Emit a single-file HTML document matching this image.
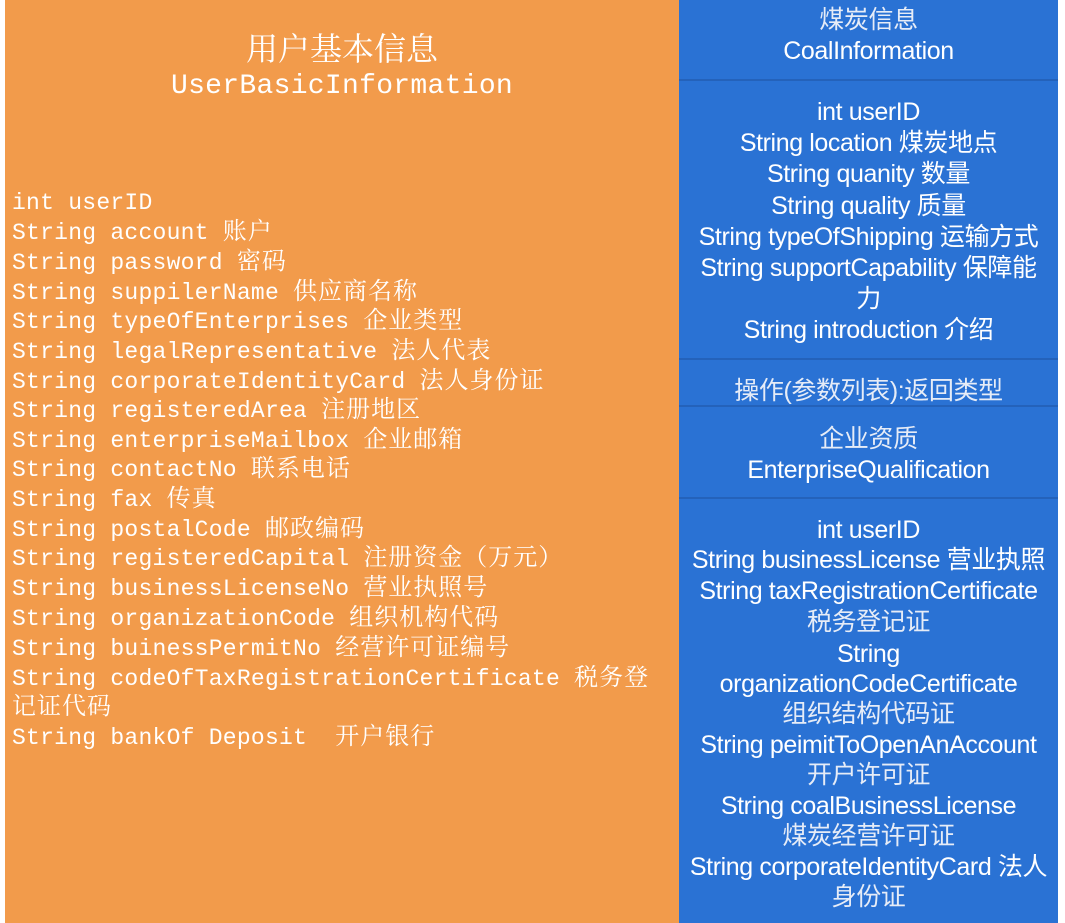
<!DOCTYPE html>
<html><head><meta charset="utf-8"><style>
body{margin:0;width:1065px;height:923px;background:#fff;position:relative;overflow:hidden}
#o{position:absolute;left:5px;top:0;width:674px;height:923px;background:#F29B4B}
#b{position:absolute;left:679px;top:0;width:379px;height:923px;background:#2A72D4}
.hr{position:absolute;left:679px;width:379px;height:2px;background:#2462BA}
.l{position:absolute;left:12px;height:30px;line-height:30px;margin-top:2px;font-family:"Liberation Mono","Noto Serif CJK SC",monospace;font-size:23px;letter-spacing:0.25px;color:#fff;white-space:pre}
.l b{font-weight:normal;font-size:24px;letter-spacing:1px}
.r{position:absolute;left:669px;width:399px;text-align:center;height:31px;line-height:31px;margin-top:2px;font-family:"Liberation Sans","Noto Sans CJK SC",sans-serif;font-size:25px;color:#fff;white-space:pre;letter-spacing:-0.4px}
.c{color:#e6ecf7}
</style></head><body>
<div id="o"></div><div id="b"></div>
<div class="hr" style="top:79px"></div>
<div class="hr" style="top:358px"></div>
<div class="hr" style="top:405px"></div>
<div class="hr" style="top:497px"></div>
<div style="position:absolute;left:5px;width:674px;top:27px;text-align:center;color:#fff;font-family:'Noto Serif CJK SC',serif;font-size:32px;line-height:40px">用户基本信息</div>
<div style="position:absolute;left:5px;width:674px;top:69px;text-align:center;color:#fff;font-family:'Liberation Mono',monospace;font-size:28px;letter-spacing:0.3px;line-height:36px">UserBasicInformation</div>
<div class="l" style="top:186px">int userID</div>
<div class="l" style="top:216px">String account <b>账户</b></div>
<div class="l" style="top:246px">String password <b>密码</b></div>
<div class="l" style="top:276px">String suppilerName <b>供应商名称</b></div>
<div class="l" style="top:305px">String typeOfEnterprises <b>企业类型</b></div>
<div class="l" style="top:335px">String legalRepresentative <b>法人代表</b></div>
<div class="l" style="top:365px">String corporateIdentityCard <b>法人身份证</b></div>
<div class="l" style="top:394px">String registeredArea <b>注册地区</b></div>
<div class="l" style="top:424px">String enterpriseMailbox <b>企业邮箱</b></div>
<div class="l" style="top:453px">String contactNo <b>联系电话</b></div>
<div class="l" style="top:483px">String fax <b>传真</b></div>
<div class="l" style="top:513px">String postalCode <b>邮政编码</b></div>
<div class="l" style="top:542px">String registeredCapital <b>注册资金（万元）</b></div>
<div class="l" style="top:572px">String businessLicenseNo <b>营业执照号</b></div>
<div class="l" style="top:602px">String organizationCode <b>组织机构代码</b></div>
<div class="l" style="top:632px">String buinessPermitNo <b>经营许可证编号</b></div>
<div class="l" style="top:662px">String codeOfTaxRegistrationCertificate <b>税务登</b></div>
<div class="l" style="top:691px"><b>记证代码</b></div>
<div class="l" style="top:721px">String bankOf Deposit  <b>开户银行</b></div>

<div class="r c" style="top:3px">煤炭信息</div>
<div class="r" style="top:34px">CoalInformation</div>
<div class="r" style="top:95px">int userID</div>
<div class="r" style="top:126px">String location 煤炭地点</div>
<div class="r" style="top:157px">String quanity 数量</div>
<div class="r" style="top:189px">String quality 质量</div>
<div class="r" style="top:220px">String typeOfShipping 运输方式</div>
<div class="r" style="top:251px">String supportCapability 保障能</div>
<div class="r" style="top:282px">力</div>
<div class="r" style="top:313px">String introduction 介绍</div>
<div class="r c" style="top:374px">操作(参数列表):返回类型</div>
<div class="r c" style="top:422px">企业资质</div>
<div class="r" style="top:453px">EnterpriseQualification</div>
<div class="r" style="top:513px">int userID</div>
<div class="r" style="top:543px">String businessLicense 营业执照</div>
<div class="r" style="top:574px">String taxRegistrationCertificate</div>
<div class="r c" style="top:605px">税务登记证</div>
<div class="r" style="top:637px">String</div>
<div class="r" style="top:667px">organizationCodeCertificate</div>
<div class="r c" style="top:697px">组织结构代码证</div>
<div class="r" style="top:728px">String peimitToOpenAnAccount</div>
<div class="r c" style="top:758px">开户许可证</div>
<div class="r" style="top:789px">String coalBusinessLicense</div>
<div class="r c" style="top:819px">煤炭经营许可证</div>
<div class="r" style="top:850px">String corporateIdentityCard 法人</div>
<div class="r c" style="top:880px">身份证</div>
</body></html>
